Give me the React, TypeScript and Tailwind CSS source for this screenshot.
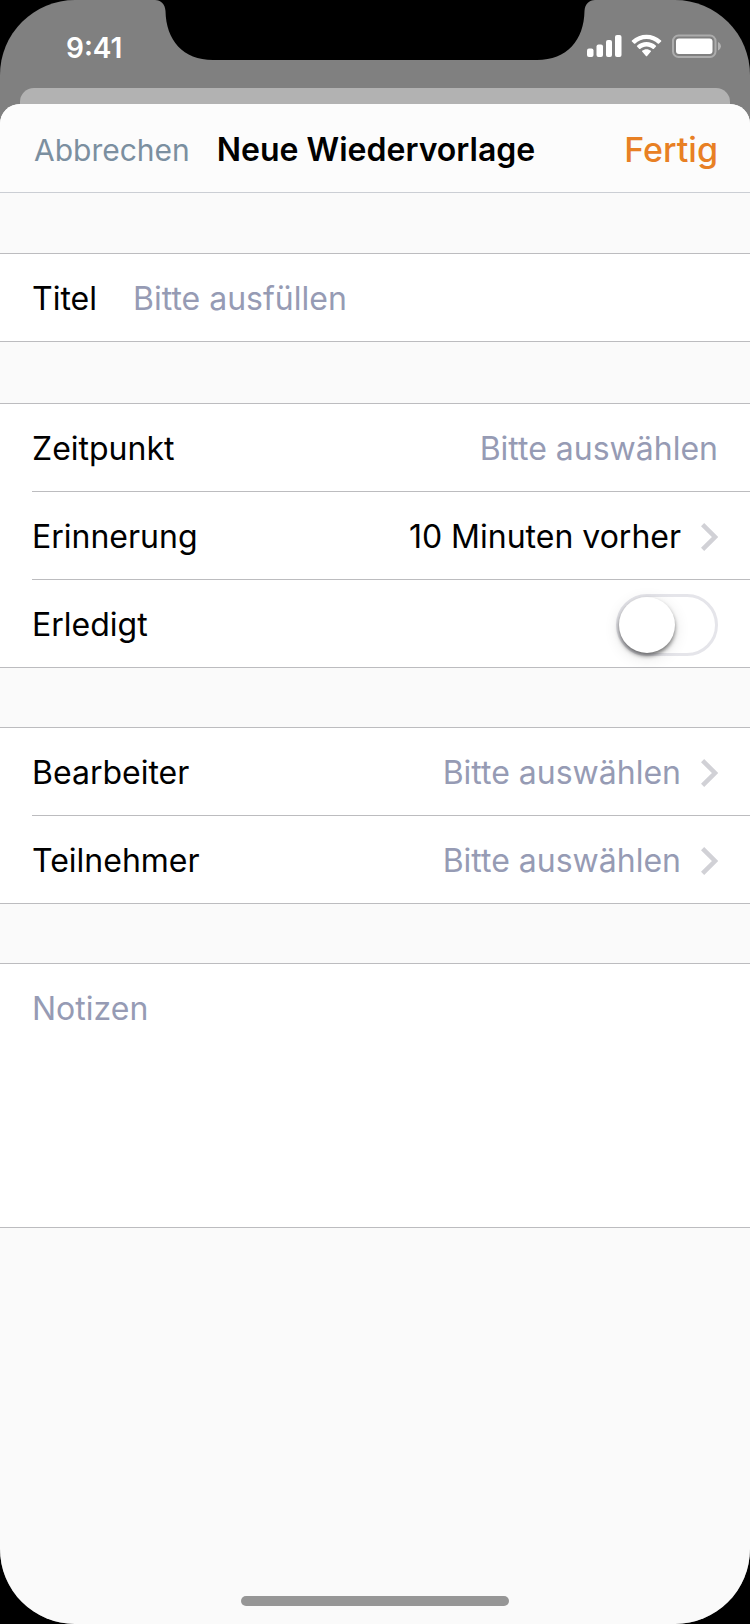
import { useState } from "react";
import type { ReactNode } from "react";

function Chevron() {
  return (
    <svg width="17" height="28" viewBox="0 0 17 28" fill="none" aria-hidden="true" className="shrink-0">
      <path d="M1.600 1.600L14 14L1.600 26.400" stroke="#d1d1d6" strokeWidth="4.500" />
    </svg>
  );
}

function StatusIcons() {
  return (
    <svg width="134" height="24" viewBox="0 0 134 24" fill="#fff" aria-hidden="true">
      {/* Signal */}
      <rect x="0" y="14.5" width="6.5" height="8.5" rx="2" />
      <rect x="9.5" y="10.5" width="6.5" height="12.5" rx="2" />
      <rect x="19" y="6" width="6" height="17" rx="2" />
      <rect x="28" y="1" width="6.5" height="22" rx="2" />
      {/* Wi-Fi */}
      <path d="M59.5 5.1c4.3 0 8.4 1.7 11.5 4.6.2.2.6.2.8 0l2.3-2.3c.3-.2.3-.6 0-.9-8.1-7.7-21.1-7.7-29.2 0-.3.3-.3.7 0 .9l2.3 2.3c.2.2.6.2.8 0 3.1-2.9 7.2-4.6 11.5-4.6z" />
      <path d="M59.5 12.4c2.4 0 4.6.9 6.4 2.5.2.2.6.2.8 0l2.3-2.3c.2-.3.2-.7 0-.9-5.3-4.9-13.7-4.9-19 0-.2.2-.2.6 0 .9l2.3 2.3c.2.2.6.2.8 0 1.8-1.6 4-2.5 6.4-2.5z" />
      <path d="M63.9 17.500c.2-.2.2-.6 0-.8-2.500-2.100-6.300-2.100-8.800 0-.2.2-.2.6 0 .8l4 4.700c.2.2.6.2.8 0z" />
      {/* Battery */}
      <rect x="86" y="1.5" width="42.5" height="21.5" rx="5.5" fill="none" stroke="#fff" strokeOpacity=".35" strokeWidth="2" />
      <rect x="89" y="4.5" width="36.5" height="15.5" rx="3" />
      <path d="M131 8v8.5c1.8-.7 2.9-2.4 2.9-4.2s-1.1-3.6-2.9-4.3z" fillOpacity=".4" />
    </svg>
  );
}

function Section({ children, className = "" }: { children: ReactNode; className?: string }) {
  return <section className={`border-t border-[#bcbcbf] bg-white ${className}`}>{children}</section>;
}

type PickerRowProps = {
  label: string;
  value?: string;
  chevron?: boolean;
};

function PickerRow({ label, value, chevron = true }: PickerRowProps) {
  return (
    <div className="group pl-8 last:pl-0">
      <button
        type="button"
        className="flex h-[88px] w-full items-center justify-between border-b border-[#bcbcbf] pt-0.5 pr-8 text-left group-last:pl-8"
      >
        <span>{label}</span>
        <span className="flex items-center gap-5">
          <span className={value ? "text-black" : "text-[#969bb4]"}>{value ?? "Bitte auswählen"}</span>
          {chevron && <Chevron />}
        </span>
      </button>
    </div>
  );
}

export default function App() {
  const [title, setTitle] = useState("");
  const [notes, setNotes] = useState("");
  const [done, setDone] = useState(false);

  return (
    <div className="min-h-screen bg-black font-['Inter','Liberation_Sans',sans-serif] text-[32px] leading-10 text-black">
      <div className="relative flex min-h-screen flex-col overflow-hidden rounded-[75px] bg-[#808080]">
        {/* Notch */}
        <svg
          width="440"
          height="60"
          viewBox="0 0 440 60"
          aria-hidden="true"
          className="absolute top-0 left-1/2 -translate-x-1/2"
        >
          <path d="M0 0C6 0 10 4 10.5 11C11 40 28 60 58 60H382C412 60 429 40 429.5 11C430 4 434 0 440 0Z" />
        </svg>

        {/* Status bar */}
        <div className="flex h-[88px] items-start justify-between pt-7 pr-[29px] pl-[66px] text-white">
          <span className="text-[28px] font-semibold">9:41</span>
          <span className="pt-1.5">
            <StatusIcons />
          </span>
        </div>

        {/* Edge of the screen below the sheet */}
        <div className="mx-5 h-4 rounded-t-[14px] bg-[#b2b2b2]" />

        <main className="flex flex-1 flex-col rounded-t-[20px] bg-[#fafafa]">
          <header className="grid h-[89px] grid-cols-[1fr_auto_1fr] items-center rounded-t-[20px] border-b border-[#cbced4] bg-[#fcfcfc] pt-1 pr-8 pl-[34px]">
            <button type="button" className="justify-self-start text-[30px] text-[#7b8fa0]">
              Abbrechen
            </button>
            <h1 className="font-semibold">Neue Wiedervorlage</h1>
            <button type="button" className="justify-self-end text-[34px] font-medium text-[#e88024]">
              Fertig
            </button>
          </header>

          <form className="flex flex-col pt-[60px]" onSubmit={(e) => e.preventDefault()}>
            <Section className="border-b">
              <div className="flex h-[87px] items-center px-8 pt-0.5">
                <label htmlFor="title" className="w-[101px] shrink-0">
                  Titel
                </label>
                <input
                  id="title"
                  type="text"
                  value={title}
                  onChange={(e) => setTitle(e.target.value)}
                  placeholder="Bitte ausfüllen"
                  className="min-w-0 flex-1 bg-transparent outline-none placeholder:text-[#969bb4]"
                />
              </div>
            </Section>

            <Section className="mt-[61px] border-b">
              <PickerRow label="Zeitpunkt" chevron={false} />
              <PickerRow label="Erinnerung" value="10 Minuten vorher" />
              <div className="flex h-[87px] items-center justify-between px-8 pt-0.5">
                <label htmlFor="done">Erledigt</label>
                <input
                  id="done"
                  type="checkbox"
                  role="switch"
                  checked={done}
                  onChange={(e) => setDone(e.target.checked)}
                  className="h-[62px] w-[102px] cursor-pointer appearance-none rounded-full border-3 border-[#e5e5ea] bg-white before:block before:size-14 before:rounded-full before:bg-white before:shadow-[0_3px_4px_rgba(0,0,0,0.5),0_4px_16px_rgba(0,0,0,0.12)] before:transition-transform checked:border-[#4cd964] checked:bg-[#4cd964] checked:before:translate-x-10"
                />
              </div>
            </Section>

            <Section className="mt-[59px]">
              <PickerRow label="Bearbeiter" />
              <PickerRow label="Teilnehmer" />
            </Section>

            <Section className="mt-[59px] border-b">
              <textarea
                aria-label="Notizen"
                value={notes}
                onChange={(e) => setNotes(e.target.value)}
                placeholder="Notizen"
                className="block h-[263px] w-full resize-none bg-transparent px-8 pt-[25px] outline-none placeholder:text-[#969bb4]"
              />
            </Section>
          </form>

          {/* Home indicator */}
          <div className="mt-auto flex justify-center pb-[18px]">
            <div className="h-[10px] w-[268px] rounded-full bg-[#969696]" />
          </div>
        </main>
      </div>
    </div>
  );
}
